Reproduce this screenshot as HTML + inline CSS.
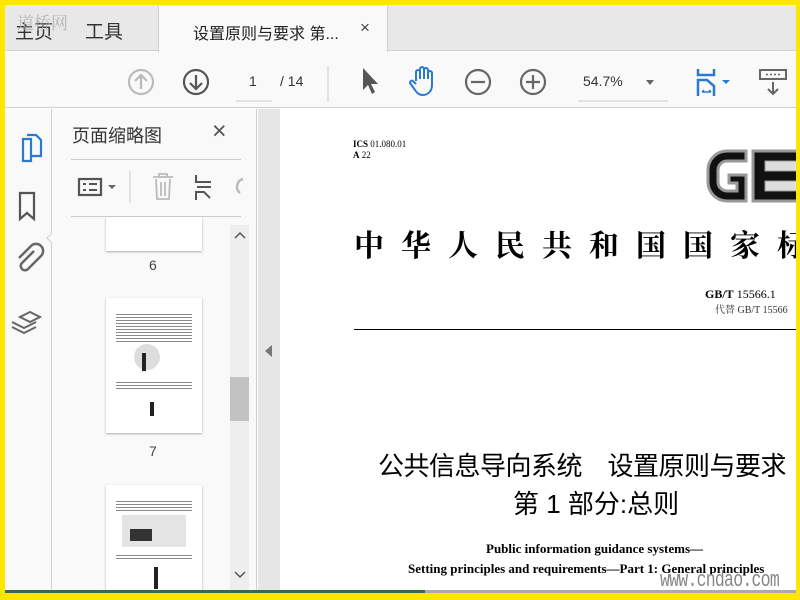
<!DOCTYPE html>
<html><head><meta charset="utf-8"><style>
*{margin:0;padding:0;box-sizing:border-box}
body{width:800px;height:600px;background:#ffe600;position:relative;overflow:hidden;font-family:"Liberation Sans","Noto Sans CJK SC",sans-serif}
.a{position:absolute}
.cj{font-family:"Liberation Sans","Noto Sans CJK SC",sans-serif}
.sf{font-family:"Liberation Serif","Noto Serif CJK SC",serif}
</style></head><body>
<div class="a" style="left:5px;top:5px;width:791px;height:588px;background:#fff;overflow:hidden">
 <div class="a" style="left:0;top:0;width:791px;height:46px;background:#e8e8e8;border-bottom:1px solid #cfcfcf"></div>
 <div class="a cj" style="left:10px;top:12px;font-size:19px;color:#333">主页</div>
 <div class="a cj" style="left:80px;top:12px;font-size:19px;color:#333">工具</div>
 <div class="a cj" style="left:12px;top:4px;font-size:17px;color:#aaa;opacity:.8;font-family:'Noto Serif CJK SC',serif">道桥网</div>
 <div class="a" style="left:153px;top:1px;width:230px;height:46px;background:#f9f9f9;border-left:1px solid #cfcfcf;border-right:1px solid #cfcfcf"></div>
 <div class="a cj" style="left:188px;top:15px;font-size:16px;color:#222">设置原则与要求 第...</div>
 <div class="a" style="left:355px;top:13px;font-size:17px;color:#444">×</div>
 <div class="a" style="left:0;top:47px;width:791px;height:56px;background:#f9f9f9;border-bottom:1px solid #cfcfcf"></div>
 <svg class="a" style="left:0;top:45px" width="791" height="56">
  <g fill="none" stroke-width="2.2">
   <circle cx="136" cy="32" r="12" stroke="#bbb"/><path d="M136 39V25M130 31l6-6 6 6" stroke="#bbb"/>
   <circle cx="191" cy="32" r="12" stroke="#555"/><path d="M191 25v14M185 33l6 6 6-6" stroke="#555"/>
   <path d="M231 51h36" stroke="#ccc" stroke-width="1"/>
   <path d="M323 16v36" stroke="#ccc" stroke-width="1"/>
   <circle cx="473" cy="32" r="12" stroke="#666"/><path d="M466 32h14" stroke="#666"/>
   <circle cx="528" cy="32" r="12" stroke="#666"/><path d="M521 32h14M528 25v14" stroke="#666"/>
   <path d="M573 51h90" stroke="#ccc" stroke-width="1"/>
  </g>
  <path d="M358 18l0 22 5-5 4 9 3-2-4-8 7 0z" fill="#555"/>
  <path d="M411 31v-9a2 2 0 014 0v7-10a2 2 0 014 0v10-9a2 2 0 014 0v9-6a2 2 0 014 0v12c0 6-4 10-9 10-4 0-6-2-8-5l-5-7a2 2 0 013-2l3 3" fill="none" stroke="#2a7ad1" stroke-width="2"/>
  <path d="M641 30h8l-4 5z" fill="#666"/>
  <path d="M693 19v6h16v-6M693 46v-16h9l7 6v10" fill="none" stroke="#2a7ad1" stroke-width="2.5"/>
  <path d="M697 42h9M697 42l2-2M706 42l-2-2" stroke="#2a7ad1" stroke-width="1.5"/>
  <path d="M717 30h8l-4 4z" fill="#2a7ad1"/>
  <rect x="755" y="20" width="26" height="9" fill="none" stroke="#666" stroke-width="2"/>
  <path d="M761 24.5h14" stroke="#666" stroke-width="1.5" stroke-dasharray="2 2"/>
  <path d="M768 32v12M763 39l5 5 5-5" fill="none" stroke="#666" stroke-width="2"/>
 </svg>
 <div class="a" style="left:244px;top:68px;font-size:14px;color:#333">1</div>
 <div class="a" style="left:275px;top:68px;font-size:14px;color:#333">/ 14</div>
 <div class="a" style="left:578px;top:68px;font-size:14px;color:#333">54.7%</div>
 <div class="a" style="left:0;top:104px;width:47px;height:484px;background:#f9f9f9;border-right:1px solid #cfcfcf"></div>
 <svg class="a" style="left:0;top:104px" width="60" height="240">
  <path d="M18 30h8v22h-8zM22 26h9l5 5v16h-10" fill="none" stroke="#2a7ad1" stroke-width="2.2"/>
  <path d="M15 84v26l7-6 7 6v-26z" fill="none" stroke="#555" stroke-width="2.2"/>
  <path d="M29 142l-12 12a4 4 0 006 6l13-13a7 7 0 00-10-10l-12 12" fill="none" stroke="#666" stroke-width="2.5"/>
  <path d="M19 208l10-5 10 5-10 5zM11 213l12 6 12-6M11 218l12 6 12-6" fill="none" stroke="#666" stroke-width="2" transform="translate(-4 0)"/>
  <path d="M47 124l-5 5 5 5" fill="#f9f9f9" stroke="#cfcfcf"/>
 </svg>
 <div class="a" style="left:48px;top:104px;width:204px;height:484px;background:#f9f9f9;border-right:1px solid #cfcfcf"></div>
 <div class="a cj" style="left:67px;top:117px;font-size:18px;color:#333">页面缩略图</div>
 <div class="a" style="left:207px;top:112px;font-size:25px;color:#555">×</div>
 <div class="a" style="left:66px;top:154px;width:170px;height:1px;background:#ccc"></div>
 <div class="a" style="left:66px;top:211px;width:170px;height:1px;background:#ccc"></div>
 <svg class="a" style="left:48px;top:158px" width="204" height="50">
  <rect x="26" y="16" width="22" height="16" fill="none" stroke="#555" stroke-width="2.2"/>
  <path d="M30 21h3M36 21h8M30 27h3M36 27h8" stroke="#555" stroke-width="2"/>
  <path d="M55 22h8l-4 4z" fill="#666"/>
  <path d="M77 8v32" stroke="#ccc"/>
  <path d="M100 14h20M106 14v-3h8v3M103 16l1 20h12l1-20M108 19v14M112 19v14" fill="none" stroke="#bbb" stroke-width="1.8"/>
  <path d="M143 12v7h15M143 37v-8h8l6 6M144 24h14" fill="none" stroke="#555" stroke-width="2"/>
  <path d="M190 16a8 8 0 00-3 14" fill="none" stroke="#bbb" stroke-width="2.5"/>
 </svg>
 <div class="a" style="left:225px;top:220px;width:19px;height:368px;background:#eee"></div>
 <div class="a" style="left:225px;top:372px;width:19px;height:44px;background:#c2c2c2"></div>
 <svg class="a" style="left:228px;top:565px" width="14" height="10"><path d="M2 2l5 5 5-5" fill="none" stroke="#555" stroke-width="1.5"/></svg>
 <svg class="a" style="left:228px;top:225px" width="14" height="10"><path d="M2 8l5-5 5 5" fill="none" stroke="#555" stroke-width="1.5"/></svg>
 <div class="a" style="left:101px;top:212px;width:96px;height:34px;background:#fff;box-shadow:0 1px 2px #aaa"></div>
 <div class="a" style="left:144px;top:252px;font-size:14px;color:#444">6</div>
 <div class="a" style="left:101px;top:293px;width:96px;height:135px;background:#fff;box-shadow:0 1px 2px #aaa">
  <div class="a" style="left:10px;top:14px;width:76px;height:30px;background:repeating-linear-gradient(#fff 0 2px,#888 2px 3px)"></div>
  <div class="a" style="left:28px;top:46px;width:26px;height:26px;border-radius:50%;background:#ddd"></div>
  <div class="a" style="left:36px;top:55px;width:4px;height:18px;background:#222"></div>
  <div class="a" style="left:10px;top:82px;width:76px;height:10px;background:repeating-linear-gradient(#fff 0 2px,#888 2px 3px)"></div>
  <div class="a" style="left:44px;top:104px;width:4px;height:14px;background:#222"></div>
 </div>
 <div class="a" style="left:144px;top:438px;font-size:14px;color:#444">7</div>
 <div class="a" style="left:101px;top:480px;width:96px;height:108px;background:#fff;box-shadow:0 1px 2px #aaa">
  <div class="a" style="left:10px;top:14px;width:76px;height:12px;background:repeating-linear-gradient(#fff 0 2px,#888 2px 3px)"></div>
  <div class="a" style="left:16px;top:30px;width:64px;height:32px;background:#e4e4e4"></div>
  <div class="a" style="left:24px;top:44px;width:22px;height:12px;background:#333"></div>
  <div class="a" style="left:10px;top:68px;width:76px;height:8px;background:repeating-linear-gradient(#fff 0 2px,#888 2px 3px)"></div>
  <div class="a" style="left:48px;top:82px;width:4px;height:22px;background:#222"></div>
 </div>
 <div class="a" style="left:253px;top:104px;width:22px;height:484px;background:#e6e6e6"></div>
 <svg class="a" style="left:258px;top:338px" width="12" height="16"><path d="M9 2L2 8l7 6z" fill="#777"/></svg>
 <div class="a sf" style="left:348px;top:134px;font-size:9px;color:#000;line-height:11px"><b>ICS</b> 01.080.01<br><b>A</b> 22</div>
 <svg class="a" style="left:696px;top:140px" width="100" height="70">
  <path d="M45 6H26a19 19 0 00-19 19v12a19 19 0 0019 19h19V30H28v8h8v8H26a9 9 0 01-9-9v-12a9 9 0 019-9h19z" fill="#111" stroke="#999" stroke-width="3"/>
  <path d="M52 6h48v50H52z" fill="#111" stroke="#999" stroke-width="3"/>
  <path d="M64 16h40v10H64zM64 36h40v10H64z" fill="#ddd" stroke="#999" stroke-width="1"/>
 </svg>
 <div class="a sf" style="left:349px;top:216px;font-size:30px;font-weight:bold;color:#000;letter-spacing:17px;white-space:nowrap;font-family:'Noto Serif CJK SC',serif">中华人民共和国国家标准</div>
 <div class="a sf" style="left:700px;top:282px;font-size:12px;color:#000;white-space:nowrap"><b>GB/T</b> 15566.1</div>
 <div class="a sf" style="left:710px;top:296px;font-size:10px;color:#333;white-space:nowrap">代替 GB/T 15566</div>
 <div class="a" style="left:349px;top:324px;width:447px;height:1px;background:#000"></div>
 <div class="a cj" style="left:373px;top:441px;font-size:26px;color:#000;white-space:nowrap;letter-spacing:-0.5px">公共信息导向系统　设置原则与要求</div>
 <div class="a cj" style="left:508px;top:479px;font-size:26px;color:#000;white-space:nowrap">第 1 部分:总则</div>
 <div class="a sf" style="left:481px;top:536px;font-size:13px;font-weight:bold;color:#000;white-space:nowrap">Public information guidance systems—</div>
 <div class="a sf" style="left:403px;top:556px;font-size:13px;font-weight:bold;color:#000;white-space:nowrap">Setting principles and requirements—Part 1: General principles</div>
 <div class="a" style="left:655px;top:563px;font-size:22px;color:#888;font-family:'Liberation Mono',monospace;letter-spacing:-1px;transform:scaleX(.75);transform-origin:left">www.cndao.com</div>
 <div class="a" style="left:0;top:585px;width:791px;height:3px;background:#aaa"></div>
 <div class="a" style="left:0;top:585px;width:420px;height:3px;background:#3a6a4a"></div>
</div>
</body></html>
